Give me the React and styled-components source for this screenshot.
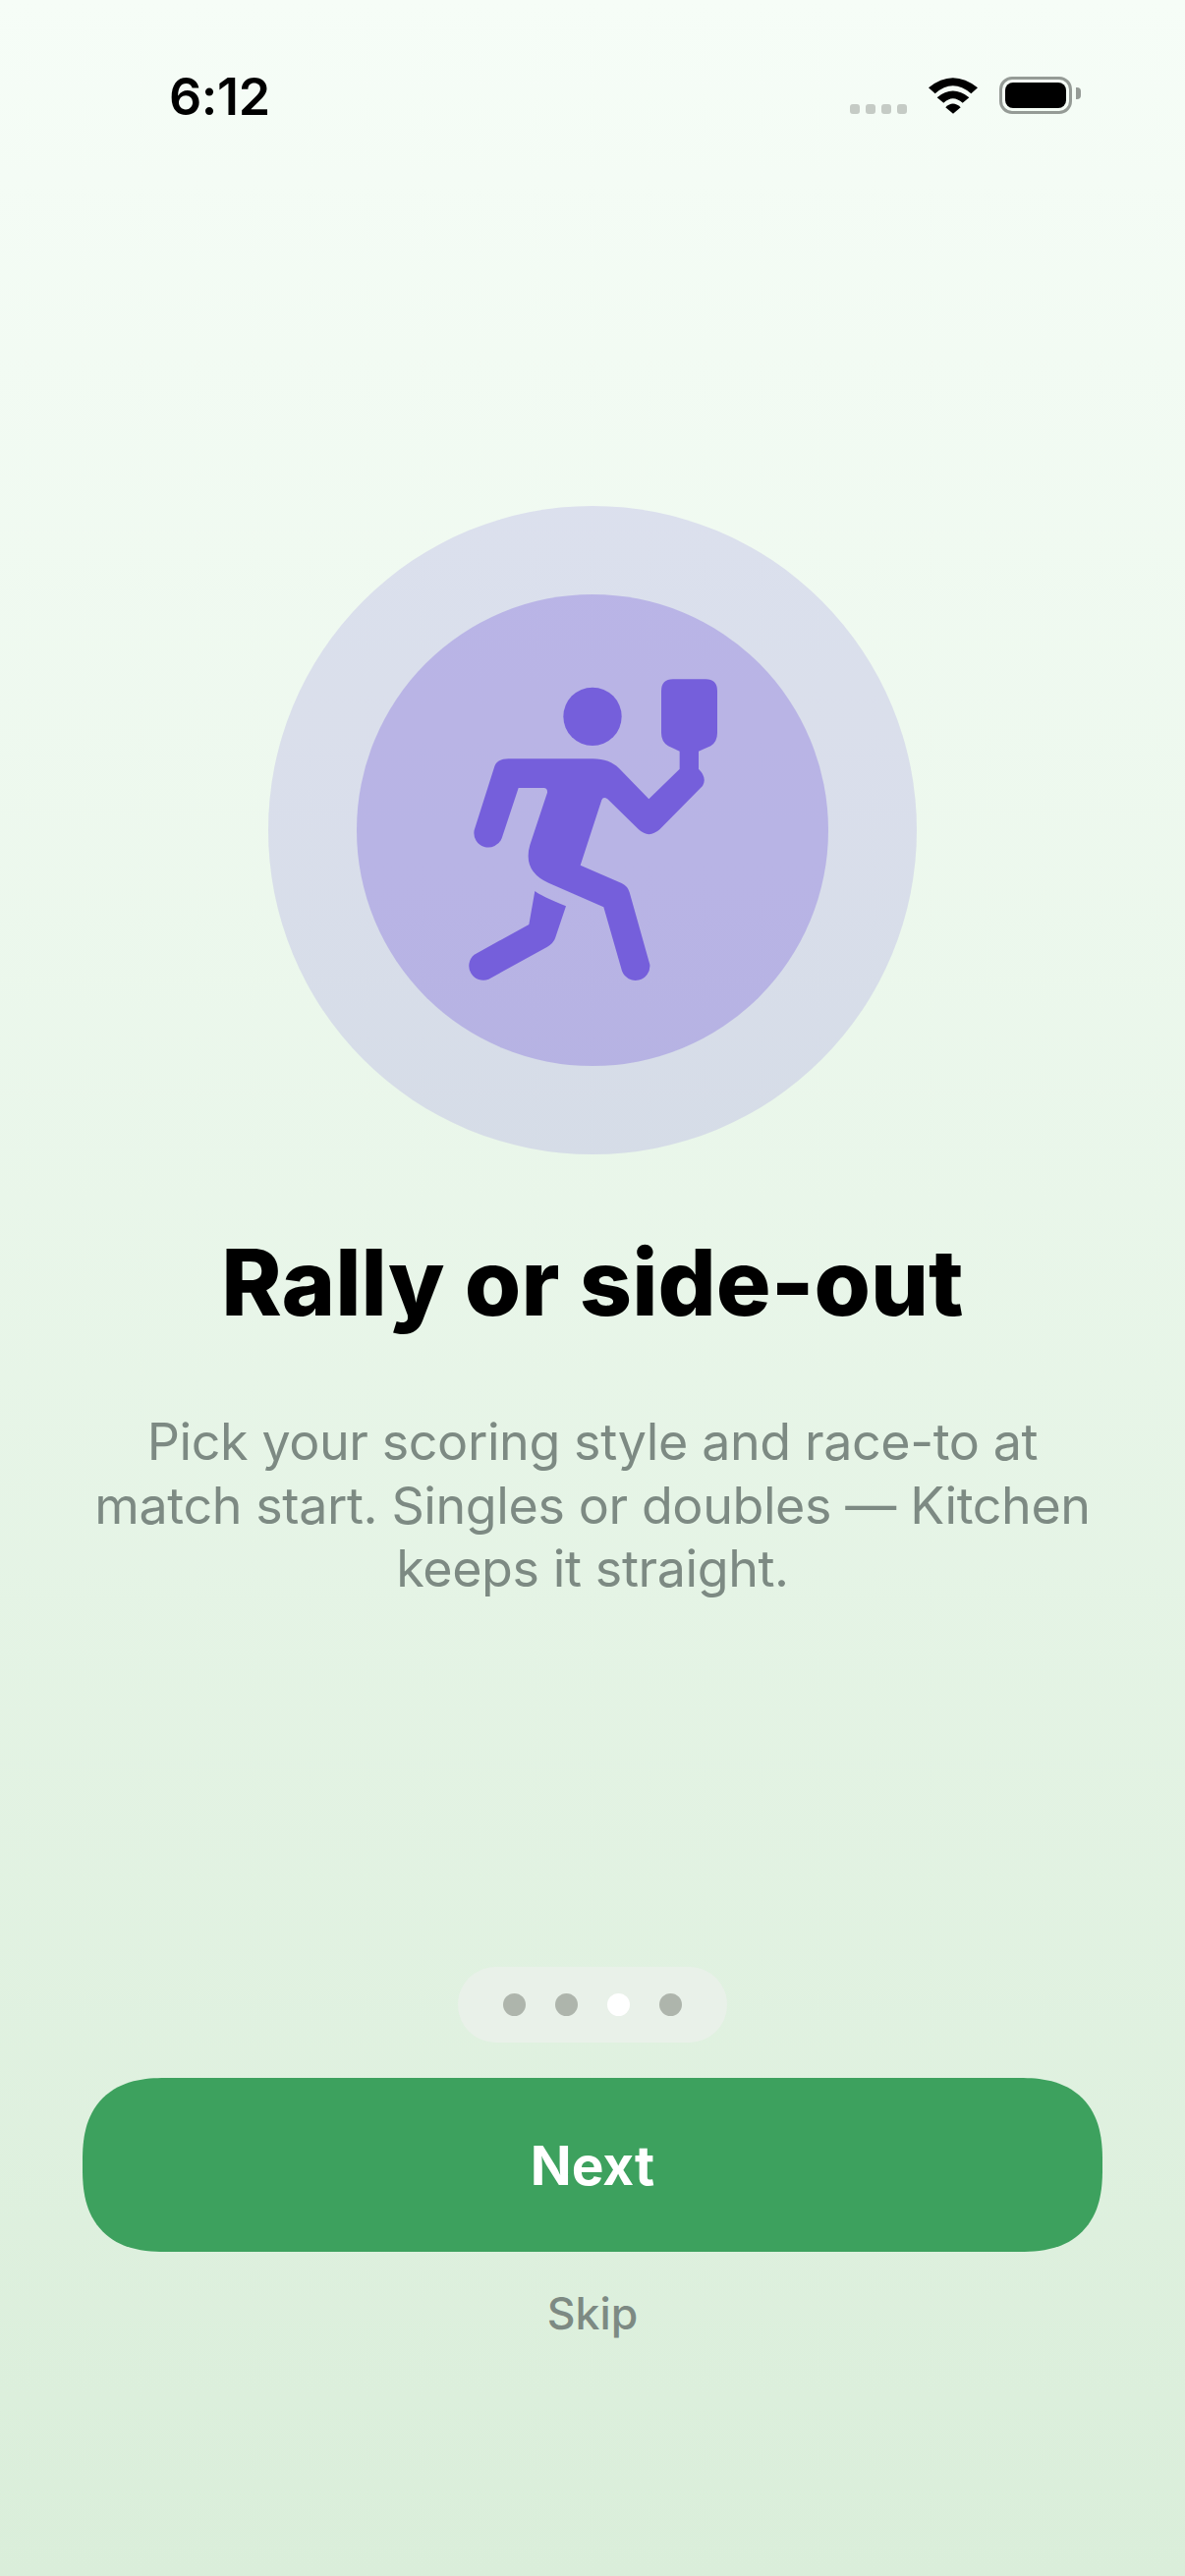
import styled, { createGlobalStyle } from "styled-components";

const GlobalStyle = createGlobalStyle`
  html, body {
    margin: 0;
    padding: 0;
  }
  body {
    font-family: Inter, "Liberation Sans", sans-serif;
  }
  * {
    box-sizing: border-box;
  }
`;

const Screen = styled.div`
  width: 1206px;
  height: 2622px;
  display: flex;
  flex-direction: column;
  align-items: center;
  overflow: hidden;
  background: linear-gradient(180deg, #f6fdf7 0%, #daeeda 100%);
`;

const StatusBar = styled.div`
  width: 100%;
  height: 196px;
  padding: 0 107px 0 172px;
  display: flex;
  justify-content: space-between;
  align-items: center;
`;

const Time = styled.div`
  font-size: 52px;
  font-weight: 600;
  letter-spacing: -0.4px;
  color: #000;
`;

const StatusIcons = styled.div`
  display: flex;
  align-items: flex-end;
  margin-top: -3px;
`;

const SignalDots = styled.div`
  display: flex;
  gap: 6px;
  margin-right: 22px;
`;

const SignalDot = styled.span`
  width: 10px;
  height: 10px;
  border-radius: 3px;
  background: #c5cbc5;
`;

const Battery = styled.div`
  position: relative;
  width: 74px;
  height: 38px;
  margin-left: 22px;
  margin-right: 8px;
  padding: 3px;
  border: 3px solid #959b96;
  border-radius: 13px;

  &::after {
    content: "";
    position: absolute;
    right: -12px;
    top: 8px;
    width: 5px;
    height: 12px;
    border-radius: 0 4px 4px 0;
    background: #959b96;
  }
`;

const BatteryFill = styled.div`
  width: 100%;
  height: 100%;
  border-radius: 8px;
  background: #000;
`;

const OuterRing = styled.div`
  width: 660px;
  height: 660px;
  margin-top: 319px;
  border-radius: 50%;
  background: rgba(117, 95, 219, 0.17);
  display: flex;
  align-items: center;
  justify-content: center;
`;

const InnerRing = styled.div`
  width: 480px;
  height: 480px;
  border-radius: 50%;
  background: rgba(117, 95, 219, 0.33);
  display: flex;
  align-items: center;
  justify-content: center;
`;

const Title = styled.h1`
  margin: 75px 0 0;
  font-size: 93px;
  line-height: 110px;
  font-weight: 800;
  color: #000;
  text-align: center;
`;

const Body = styled.p`
  width: 1030px;
  margin: 76px 0 0;
  font-size: 52px;
  line-height: 64.5px;
  font-weight: 400;
  letter-spacing: -0.4px;
  color: #7d8a83;
  text-align: center;
`;

const Footer = styled.div`
  margin-top: auto;
  padding-bottom: 237px;
  display: flex;
  flex-direction: column;
  align-items: center;
`;

const Pager = styled.div`
  width: 274px;
  height: 77px;
  border-radius: 39px;
  background: rgba(240, 240, 240, 0.55);
  display: flex;
  align-items: center;
  justify-content: center;
  gap: 30px;
`;

const PagerDot = styled.span`
  width: 23px;
  height: 23px;
  border-radius: 50%;
  background: ${(props) => (props.$active ? "#ffffff" : "#aeb5ac")};
`;

const NextButton = styled.button`
  width: 1038px;
  height: 177px;
  margin-top: 36px;
  border: none;
  border-radius: 84px;
  corner-shape: superellipse(1.3);
  background: #3da15e;
  color: #fff;
  font-family: inherit;
  font-size: 55px;
  font-weight: 700;
`;

const SkipButton = styled.button`
  height: 60px;
  margin-top: 33px;
  padding: 0;
  border: none;
  background: none;
  color: #7d8a83;
  font-family: inherit;
  font-size: 44.5px;
  font-weight: 500;
`;

function WifiIcon() {
  return (
    <svg width="50" height="37" viewBox="316 58 150 110" fill="#000">
      <path d="M316 88 Q390 28 466 88 L446 106 Q390 58 336 106 Z" />
      <path d="M342 118 Q390 78 440 118 L420 135 Q390 108 362 135 Z" />
      <path d="M368 148 Q390 126 414 148 L391 168 Z" />
    </svg>
  );
}

function PlayerIcon() {
  return (
    <svg width="320" height="360" viewBox="9 15 960 1080" fill="#755fdb">
      <circle cx="489" cy="208" r="89" />
      <path d="M190 360 Q198 337 232 337 L490 337 C525 337 552 348 570 366 L661 460 L755 368 L755 314 L720 298 Q699 285 699 258 L699 130 Q699 94 735 94 L834 94 Q870 94 870 130 L870 258 Q870 285 850 298 L813 314 L813 368 Q840 395 825 420 L694 553 Q661 582 630 553 L535 460 Q522 450 517 463 L452 662 L578 717 Q597 726 602 745 L664 965 A44 44 0 0 1 579 985 L523 790 L355 716 Q275 680 298 600 L351 440 Q352 426 340 426 L263 426 L212 580 A44 44 0 0 1 128 555 Z" />
      <path d="M313 741 Q330 755 408 787 L375 885 Q370 900 350 912 L172 1010 A44 44 0 0 1 128 935 L295 843 Z" />
    </svg>
  );
}

export default function App() {
  return (
    <Screen>
      <GlobalStyle />
      <StatusBar>
        <Time>6:12</Time>
        <StatusIcons>
          <SignalDots>
            <SignalDot />
            <SignalDot />
            <SignalDot />
            <SignalDot />
          </SignalDots>
          <WifiIcon />
          <Battery>
            <BatteryFill />
          </Battery>
        </StatusIcons>
      </StatusBar>
      <OuterRing>
        <InnerRing>
          <PlayerIcon />
        </InnerRing>
      </OuterRing>
      <Title>Rally or side-out</Title>
      <Body>
        Pick your scoring style and race-to at match start. Singles or doubles — Kitchen keeps it straight.
      </Body>
      <Footer>
        <Pager>
          <PagerDot />
          <PagerDot />
          <PagerDot $active />
          <PagerDot />
        </Pager>
        <NextButton>Next</NextButton>
        <SkipButton>Skip</SkipButton>
      </Footer>
    </Screen>
  );
}
